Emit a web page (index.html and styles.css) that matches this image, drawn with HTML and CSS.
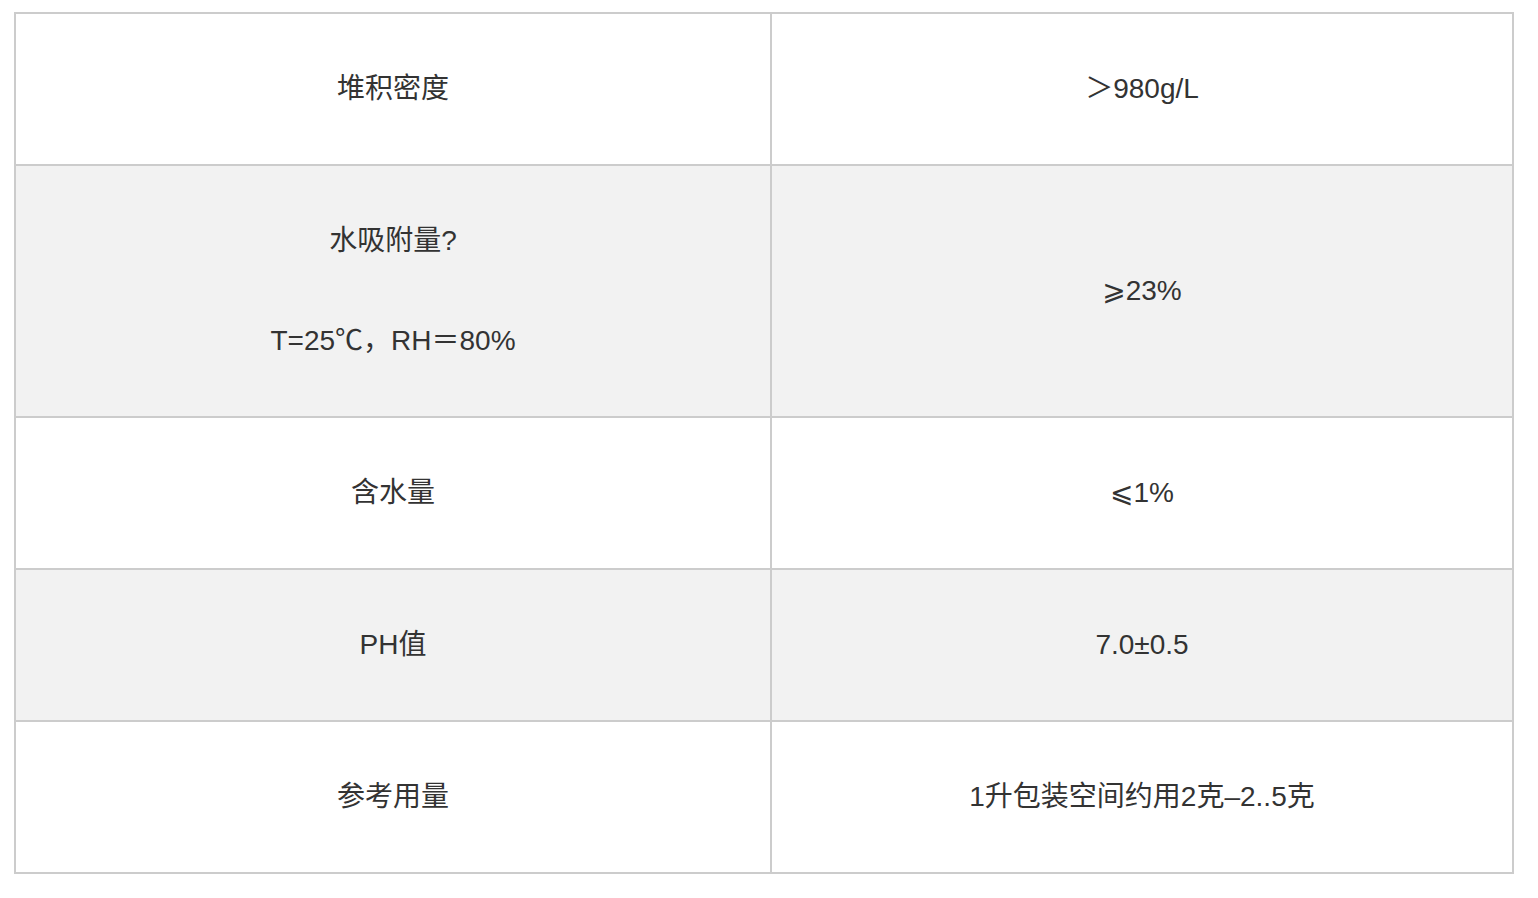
FILE: index.html
```html
<!DOCTYPE html>
<html lang="zh-CN">
<head>
<meta charset="utf-8">
<title>参数表</title>
<link rel="stylesheet" href="styles.css">
</head>
<body>
<div class="spec-table">
  <div class="cell">堆积密度</div>
  <div class="cell">＞980g/L</div>

  <div class="cell alt">
    <div class="stack">
      <p>水吸附量?</p>
      <p>T=25℃，RH＝80%</p>
    </div>
  </div>
  <div class="cell alt">⩾23%</div>

  <div class="cell">含水量</div>
  <div class="cell">⩽1%</div>

  <div class="cell alt">PH值</div>
  <div class="cell alt">7.0±0.5</div>

  <div class="cell">参考用量</div>
  <div class="cell">1升包装空间约用2克–2..5克</div>
</div>
</body>
</html>
```

FILE: styles.css
```css
html, body {
  margin: 0;
  padding: 0;
  background: #ffffff;
}

body {
  padding: 12px 14px;
  font-family: "Liberation Sans", "Noto Sans CJK SC", "DejaVu Sans", sans-serif;
  font-size: 28px;
  line-height: 42px;
  color: #333333;
}

.spec-table {
  width: 1500px;
  box-sizing: border-box;
  display: grid;
  grid-template-columns: 754px 740px;
  grid-template-rows: 150px 250px 150px 150px 150px;
  gap: 2px;
  padding: 2px;
  background: #cccccc;
}

.cell {
  background: #ffffff;
  display: flex;
  align-items: center;
  justify-content: center;
  text-align: center;
}

.cell.alt {
  background: #f2f2f2;
}

.stack {
  display: flex;
  flex-direction: column;
  align-items: center;
  gap: 58px;
}

.stack p {
  margin: 0;
}
```
